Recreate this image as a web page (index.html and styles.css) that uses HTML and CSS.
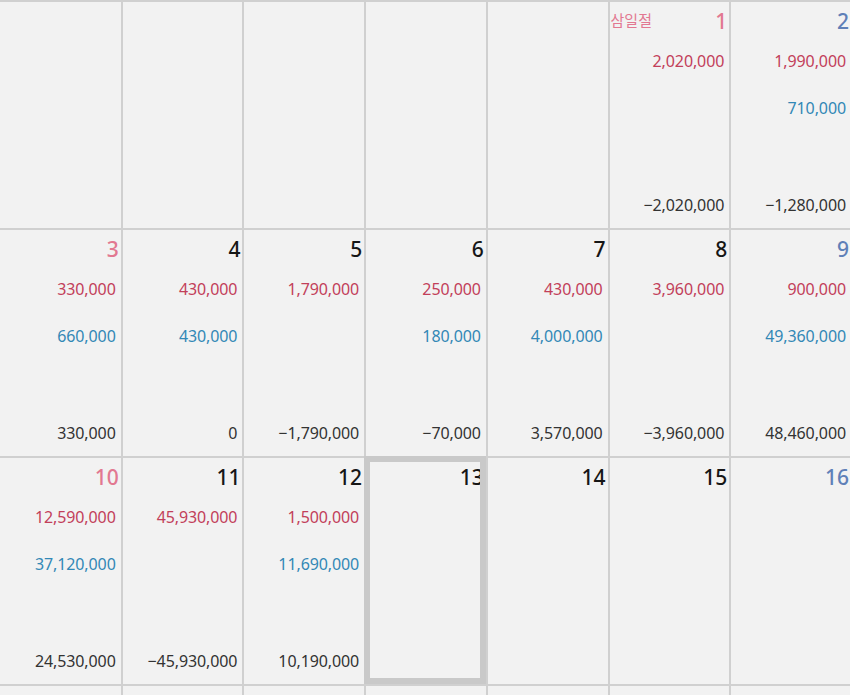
FILE: index.html
```html
<!DOCTYPE html>
<html lang="ko">
<head>
<meta charset="utf-8">
<title>달력</title>
<link rel="stylesheet" href="styles.css">
</head>
<body>
<div class="cal">
  <div class="cell"></div>
  <div class="cell"></div>
  <div class="cell"></div>
  <div class="cell"></div>
  <div class="cell"></div>
  <div class="cell">
    <div class="head"><span class="hol">삼일절</span><span class="day sun">1</span></div>
    <div class="amt out">2,020,000</div>
    <div class="amt net">−2,020,000</div>
  </div>
  <div class="cell">
    <div class="head"><span class="day sat">2</span></div>
    <div class="amt out">1,990,000</div>
    <div class="amt in">710,000</div>
    <div class="amt net">−1,280,000</div>
  </div>

  <div class="cell">
    <div class="head"><span class="day sun">3</span></div>
    <div class="amt out">330,000</div>
    <div class="amt in">660,000</div>
    <div class="amt net">330,000</div>
  </div>
  <div class="cell">
    <div class="head"><span class="day">4</span></div>
    <div class="amt out">430,000</div>
    <div class="amt in">430,000</div>
    <div class="amt net">0</div>
  </div>
  <div class="cell">
    <div class="head"><span class="day">5</span></div>
    <div class="amt out">1,790,000</div>
    <div class="amt net">−1,790,000</div>
  </div>
  <div class="cell">
    <div class="head"><span class="day">6</span></div>
    <div class="amt out">250,000</div>
    <div class="amt in">180,000</div>
    <div class="amt net">−70,000</div>
  </div>
  <div class="cell">
    <div class="head"><span class="day">7</span></div>
    <div class="amt out">430,000</div>
    <div class="amt in">4,000,000</div>
    <div class="amt net">3,570,000</div>
  </div>
  <div class="cell">
    <div class="head"><span class="day">8</span></div>
    <div class="amt out">3,960,000</div>
    <div class="amt net">−3,960,000</div>
  </div>
  <div class="cell">
    <div class="head"><span class="day sat">9</span></div>
    <div class="amt out">900,000</div>
    <div class="amt in">49,360,000</div>
    <div class="amt net">48,460,000</div>
  </div>

  <div class="cell">
    <div class="head"><span class="day sun">10</span></div>
    <div class="amt out">12,590,000</div>
    <div class="amt in">37,120,000</div>
    <div class="amt net">24,530,000</div>
  </div>
  <div class="cell">
    <div class="head"><span class="day">11</span></div>
    <div class="amt out">45,930,000</div>
    <div class="amt net">−45,930,000</div>
  </div>
  <div class="cell">
    <div class="head"><span class="day">12</span></div>
    <div class="amt out">1,500,000</div>
    <div class="amt in">11,690,000</div>
    <div class="amt net">10,190,000</div>
  </div>
  <div class="cell sel">
    <div class="head"><span class="day">13</span></div>
  </div>
  <div class="cell">
    <div class="head"><span class="day">14</span></div>
  </div>
  <div class="cell">
    <div class="head"><span class="day">15</span></div>
  </div>
  <div class="cell">
    <div class="head"><span class="day sat">16</span></div>
  </div>

  <div class="cell"></div>
  <div class="cell"></div>
  <div class="cell"></div>
  <div class="cell"></div>
  <div class="cell"></div>
  <div class="cell"></div>
  <div class="cell"></div>
</div>
</body>
</html>
```

FILE: styles.css
```css
html, body {
  margin: 0;
  padding: 0;
  background: #f2f2f2;
  overflow: hidden;
}

body {
  width: 850px;
  height: 695px;
  font-family: "Noto Sans", "Noto Sans CJK KR", sans-serif;
}

.cal {
  display: grid;
  grid-template-columns: repeat(7, 1fr);
  grid-auto-rows: 228px;
  width: 852px;
  height: 695px;
  margin-left: -1px;
  overflow: hidden;
}

.cell {
  position: relative;
  box-sizing: border-box;
  border-top: 2px solid #d0d0d0;
  border-left: 2px solid #d0d0d0;
  padding: 6px 5px 11px 1px;
  display: grid;
  grid-template-rows: 30px 47px 47px 1fr 24px;
  background: #f2f2f2;
}

.cell:nth-child(7n+1) {
  border-left: none;
}

.head {
  grid-row: 1;
  display: flex;
  justify-content: space-between;
  align-items: flex-start;
  height: 26px;
  line-height: 26px;
  margin-right: -3px;
}

.day {
  margin-left: auto;
  font-size: 21px;
  font-weight: 500;
  color: #161616;
}

.day.sun {
  color: #e27891;
}

.day.sat {
  color: #5f80b8;
}

.hol {
  font-size: 15px;
  color: #e27891;
  line-height: 24px;
}

.amt {
  text-align: right;
  font-size: 16px;
  letter-spacing: -0.1px;
}

.out {
  grid-row: 2;
  line-height: 47px;
  color: #c2405a;
}

.in {
  grid-row: 3;
  line-height: 47px;
  color: #3388b6;
}

.net {
  grid-row: 5;
  line-height: 24px;
  color: #333333;
}

.sel::after {
  content: "";
  position: absolute;
  top: -2px;
  left: -2px;
  right: 0;
  bottom: 0;
  border: 6px solid #c9c9c9;
}
```
